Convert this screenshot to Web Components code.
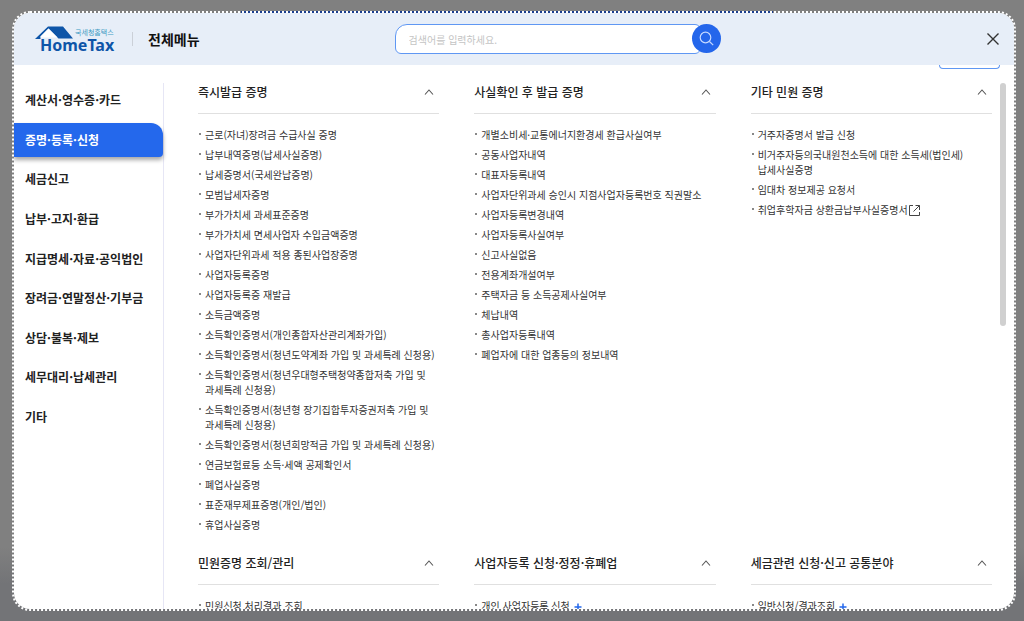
<!DOCTYPE html>
<html lang="ko">
<head>
<meta charset="utf-8">
<title>전체메뉴</title>
<style>
  html, body { margin: 0; height: 100%; }
  body { background: #808080; font-family: "Noto Sans CJK KR", sans-serif; color: #222; overflow: hidden; }
</style>
</head>
<body>
<menu-dialog></menu-dialog>
<script>
const define = (name, html, setup) => {
  const template = document.createElement('template');
  template.innerHTML = html;
  customElements.define(name, class extends HTMLElement {
    connectedCallback() {
      if (this.shadowRoot) return;
      this.attachShadow({ mode: 'open' }).append(template.content.cloneNode(true));
      if (setup) setup(this, this.shadowRoot);
    }
  });
};

define('hometax-logo', `
<style>
  :host { display: block; position: relative; width: 82px; height: 28px; }
  svg { display: block; }
  a { display: block; color: #0e55a8; text-decoration: none; }
  small, b { position: absolute; white-space: nowrap; }
  small { left: 41px; top: 3px; font-size: 7px; line-height: 8px; color: #3f9cc4; }
  b { left: 6px; top: 12px; font: 700 16px/16px "Noto Sans", sans-serif; }
</style>
<a href="#">
  <svg width="82" height="28" viewBox="0 0 82 28" aria-hidden="true">
    <path d="M14 1.500h15L39 13.500H24.500L14.500 3.500 6.500 11.500v2.500H1z" fill="#0e55a8"/>
    <path d="M14.500 3.500l9 9h-17v-1z" fill="#fff"/>
  </svg>
  <small>국세청홈택스</small><b>HomeTax</b>
</a>`);

define('menu-search', `
<style>
  :host { display: block; width: 326px; }
  form { display: flex; align-items: flex-start; margin: 0; }
  input { flex: 1; min-width: 0; height: 30px; box-sizing: border-box; border: 1px solid #5f97f3; border-radius: 12px 6px 6px 6px;
    padding: 0 13px; font: 10px "Noto Sans CJK KR", sans-serif; background: #fff; outline: 0; }
  input::placeholder { color: #c4c4c4; opacity: 1; }
  button { width: 29px; height: 29px; margin-left: -9px; border: 0; border-radius: 50%; padding: 0; background: #2466eb; display: grid; place-items: center; z-index: 1; }
</style>
<form role="search">
  <input type="search" aria-label="검색어" placeholder="검색어를 입력하세요.">
  <button type="button" aria-label="검색"><svg width="15" height="15" viewBox="0 0 15 15" fill="none" stroke="#c3d7ff" stroke-width="1.200"><circle cx="6.500" cy="6.500" r="5.300"/><path d="M10.500 10.500l3.700 3.700"/></svg></button>
</form>`);

define('menu-header', `
<style>
  :host { display: grid; grid-template-columns: 9fr auto 7fr; background: #e7eef8; height: 52px; padding: 0 13px 0 20px; align-items: center; box-sizing: border-box; }
  .brand { display: flex; align-items: center; }
  h1 { margin: 0 0 0 16px; padding-left: 15px; font-size: 14px; line-height: 14px; font-weight: 700; color: #111; border-left: 1px solid #cbd0d8; }
  .close { justify-self: end; width: 16px; height: 16px; padding: 0; border: 0; background: none; }
  svg { display: block; }
</style>
<div class="brand"><hometax-logo></hometax-logo><h1>전체메뉴</h1></div>
<menu-search></menu-search>
<button class="close" aria-label="닫기"><svg width="16" height="16" viewBox="0 0 16 16" stroke="#333" stroke-width="1.400"><path d="M2.500 2.500l11 11M13.500 2.500l-11 11"/></svg></button>`);

define('side-nav', `
<style>
  :host { display: block; width: 149px; border-right: 1px solid #e6e6f5; box-sizing: content-box; }
  ul { list-style: none; margin: 0; padding: 0; height: 351px; display: flex; flex-direction: column; justify-content: space-between; }
  a { display: block; height: 34px; line-height: 34px; padding-left: 11px; font-size: 12px; font-weight: 700; color: #222; text-decoration: none; white-space: nowrap; }
  a[aria-current] { color: #fff; background: #2468ec; border-radius: 0 12px 4px 0; box-shadow: 0 3px 4px rgba(0,0,0,.35); }
</style>
<nav><ul></ul></nav>`, (host, root) => {
  root.querySelector('ul').innerHTML = ['계산서·영수증·카드', '증명·등록·신청', '세금신고', '납부·고지·환급', '지급명세·자료·공익법인', '장려금·연말정산·기부금', '상담·불복·제보', '세무대리·납세관리', '기타']
    .map((t, i) => `<li><a href="#"${i === 1 ? ' aria-current="page"' : ''}>${t}</a></li>`).join('');
});

define('menu-link', `
<style>
  :host { display: grid; grid-template-columns: 7px 1fr; font-size: 10px; line-height: 15px; word-break: keep-all; }
  :host::before { content: ""; width: 2px; height: 2px; margin: 6px 0 0 1px; background: #888; }
  a { color: #333; text-decoration: none; }
  svg { vertical-align: -2px; margin-left: 1px; }
  svg.plus { display: none; margin-left: 4px; vertical-align: -1px; }
  svg.out { display: none; }
  :host([plus]) svg.plus, :host([external]) svg.out { display: inline; }
</style>
<a href="#"><slot></slot><svg class="out" width="11" height="11" viewBox="0 0 11 11" fill="none" stroke="#444"><path d="M4 .5H.5v10h10V7M6.500 .5h4V5M10.500 .5L4.500 6.500"/></svg><svg class="plus" width="8" height="8" viewBox="0 0 8 8" stroke="#2468ec" stroke-width="1.500"><path d="M4 .5v7M.5 4h7"/></svg></a>`);

define('menu-section', `
<style>
  :host { display: block; }
  header { display: flex; justify-content: space-between; align-items: center; padding: 0 5px 13px 0; border-bottom: 1px solid #e0e0e0; }
  h2 { margin: 0; font-size: 12px; line-height: 16px; font-weight: 500; color: #222; white-space: nowrap; }
  button { padding: 0; border: 0; background: none; width: 10px; height: 16px; display: grid; place-items: center; }
  .links { display: grid; gap: 5px; padding-top: 13px; }
</style>
<section><header><h2></h2><button aria-label="접기"><svg width="10" height="6" viewBox="0 0 10 6" fill="none" stroke="#555" stroke-width="1.100"><path d="M1 5.500L5 1l4 4.500"/></svg></button></header>
<div class="links"><slot></slot></div></section>`, (host, root) => {
  root.querySelector('h2').textContent = host.getAttribute('heading');
});

define('menu-content', `
<style>
  :host { display: flex; flex: 1; min-width: 0; overflow: hidden; }
  .sections { flex: 1; display: grid; grid-template-columns: repeat(3, 1fr); gap: 23px 35px; align-content: start; padding: 1px 8px 0 34px; }
  .bar { width: 6px; height: 243px; border-radius: 3px; background: #d0d0d0; margin-right: 8px; }
</style>
<div class="sections">
  <menu-section heading="즉시발급 증명">
    <menu-link>근로(자녀)장려금 수급사실 증명</menu-link><menu-link>납부내역증명(납세사실증명)</menu-link><menu-link>납세증명서(국세완납증명)</menu-link><menu-link>모범납세자증명</menu-link><menu-link>부가가치세 과세표준증명</menu-link><menu-link>부가가치세 면세사업자 수입금액증명</menu-link><menu-link>사업자단위과세 적용 종된사업장증명</menu-link><menu-link>사업자등록증명</menu-link><menu-link>사업자등록증 재발급</menu-link><menu-link>소득금액증명</menu-link><menu-link>소득확인증명서(개인종합자산관리계좌가입)</menu-link><menu-link>소득확인증명서(청년도약계좌 가입 및 과세특례 신청용)</menu-link><menu-link>소득확인증명서(청년우대형주택청약종합저축 가입 및 과세특례 신청용)</menu-link><menu-link>소득확인증명서(청년형 장기집합투자증권저축 가입 및 과세특례 신청용)</menu-link><menu-link>소득확인증명서(청년희망적금 가입 및 과세특례 신청용)</menu-link><menu-link>연금보험료등 소득·세액 공제확인서</menu-link><menu-link>폐업사실증명</menu-link><menu-link>표준재무제표증명(개인/법인)</menu-link><menu-link>휴업사실증명</menu-link>
  </menu-section>
  <menu-section heading="사실확인 후 발급 증명">
    <menu-link>개별소비세·교통에너지환경세 환급사실여부</menu-link><menu-link>공동사업자내역</menu-link><menu-link>대표자등록내역</menu-link><menu-link>사업자단위과세 승인시 지점사업자등록번호 직권말소</menu-link><menu-link>사업자등록변경내역</menu-link><menu-link>사업자등록사실여부</menu-link><menu-link>신고사실없음</menu-link><menu-link>전용계좌개설여부</menu-link><menu-link>주택자금 등 소득공제사실여부</menu-link><menu-link>체납내역</menu-link><menu-link>총사업자등록내역</menu-link><menu-link>폐업자에 대한 업종등의 정보내역</menu-link>
  </menu-section>
  <menu-section heading="기타 민원 증명">
    <menu-link>거주자증명서 발급 신청</menu-link><menu-link>비거주자등의국내원천소득에 대한 소득세(법인세) 납세사실증명</menu-link><menu-link>임대차 정보제공 요청서</menu-link><menu-link external>취업후학자금 상환금납부사실증명서</menu-link>
  </menu-section>
  <menu-section heading="민원증명 조회/관리"><menu-link>민원신청 처리결과 조회</menu-link></menu-section>
  <menu-section heading="사업자등록 신청·정정·휴폐업"><menu-link plus>개인 사업자등록 신청</menu-link></menu-section>
  <menu-section heading="세금관련 신청·신고 공통분야"><menu-link plus>일반신청/결과조회</menu-link></menu-section>
</div>
<div class="bar"></div>`);

define('menu-dialog', `
<style>
  :host { display: block; height: 100%; box-sizing: border-box; padding: 11px 8px 10px 12px;
    background: linear-gradient(#1c3f8f, #1c3f8f) 49% 11px / 52% 2px no-repeat, linear-gradient(#808080 0, #808080 88%, #737477 94%); }
  .frame { height: 100%; box-sizing: border-box; border: 2px dotted #fff; border-radius: 18px; }
  .panel { position: relative; height: 100%; display: flex; flex-direction: column; background: #fff; border-radius: 16px; overflow: hidden; }
  .body { flex: 1; min-height: 0; display: flex; padding-top: 18px; }
  .tab { position: absolute; top: 52px; right: 14px; width: 61px; height: 4px; box-sizing: border-box; border: 1px solid #5f97f3; border-top: 0; border-radius: 0 0 4px 4px; }
</style>
<div class="frame" role="dialog" aria-label="전체메뉴"><div class="panel">
  <menu-header></menu-header>
  <div class="body"><side-nav></side-nav><menu-content></menu-content></div>
  <div class="tab"></div>
</div></div>`);
</script>
</body>
</html>
